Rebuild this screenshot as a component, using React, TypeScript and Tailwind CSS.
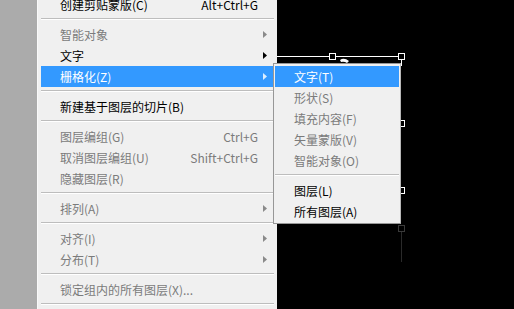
import React from 'react'

type Item =
  | { sep: true }
  | { sep?: false; label: string; shortcut?: string; arrow?: boolean; disabled?: boolean; active?: boolean }

const mainItems: Item[] = [
  { label: '创建剪贴蒙版(C)', shortcut: 'Alt+Ctrl+G' },
  { sep: true },
  { label: '智能对象', arrow: true, disabled: true },
  { label: '文字', arrow: true },
  { label: '栅格化(Z)', arrow: true, active: true },
  { sep: true },
  { label: '新建基于图层的切片(B)' },
  { sep: true },
  { label: '图层编组(G)', shortcut: 'Ctrl+G', disabled: true },
  { label: '取消图层编组(U)', shortcut: 'Shift+Ctrl+G', disabled: true },
  { label: '隐藏图层(R)', disabled: true },
  { sep: true },
  { label: '排列(A)', arrow: true, disabled: true },
  { sep: true },
  { label: '对齐(I)', arrow: true, disabled: true },
  { label: '分布(T)', arrow: true, disabled: true },
  { sep: true },
  { label: '锁定组内的所有图层(X)...', disabled: true },
  { sep: true },
]

const subItems: Item[] = [
  { label: '文字(T)', active: true },
  { label: '形状(S)', disabled: true },
  { label: '填充内容(F)', disabled: true },
  { label: '矢量蒙版(V)', disabled: true },
  { label: '智能对象(O)', disabled: true },
  { sep: true },
  { label: '图层(L)' },
  { label: '所有图层(A)' },
]

function Arrow({ color }: { color: string }) {
  return (
    <svg width="4" height="7" viewBox="0 0 4 7">
      <path d="M0 0 L4 3.5 L0 7 Z" fill={color} />
    </svg>
  )
}

function Separator() {
  return (
    <div className="h-[9px] pt-[3px]">
      <div className="h-[2px] border-t border-[#bdbdbd] border-b border-b-white" />
    </div>
  )
}

function Row({ item, withArrowSlot }: { item: Exclude<Item, { sep: true }>; withArrowSlot: boolean }) {
  const color = item.active ? 'text-white' : item.disabled ? 'text-[#7b7b7b]' : 'text-black'
  const arrowColor = item.active ? '#dceeff' : item.disabled ? '#8a8a8a' : '#000000'
  return (
    <div className={`flex h-[21px] items-center pl-[19px] leading-[21px] ${color} ${item.active ? 'bg-[#3399ff]' : ''}`}>
      <span className="flex-1 whitespace-nowrap">{item.label}</span>
      {item.shortcut && <span className="whitespace-nowrap">{item.shortcut}</span>}
      {withArrowSlot && (
        <span className="flex w-[16px] items-center pl-[5px]">{item.arrow && <Arrow color={arrowColor} />}</span>
      )}
    </div>
  )
}

function Handle({ className }: { className: string }) {
  return <div className={`absolute h-[7px] w-[7px] border bg-black ${className}`} />
}

export default function App() {
  return (
    <div
      className="relative flex h-[309px] w-[514px] overflow-hidden bg-black text-[12px]"
      style={{ fontFamily: '"Noto Sans CJK SC", "Liberation Sans", sans-serif' }}
    >
      <div className="w-[37px] bg-[#ababab]" />

      <div className="w-[240px] border-l border-[#f9f9f9] bg-[#f0f0f0] px-[3px]">
        <div className="mt-[-6px]">
          {mainItems.map((item, i) =>
            item.sep ? <Separator key={i} /> : <Row key={i} item={item} withArrowSlot />
          )}
        </div>
      </div>

      {/* canvas with the transform box */}
      <div className="relative flex-1">
        <div className="absolute left-0 top-[56px] h-px w-[124px] bg-white" />
        <div className="absolute left-[124px] top-[56px] h-[10px] w-px bg-white" />
        <div className="absolute left-[124px] top-[232px] h-[30px] w-px bg-[#2a2a2a]" />
        <Handle className="left-[52px] top-[53px] border-white" />
        <Handle className="left-[121px] top-[53px] border-white" />
        <Handle className="left-[121px] top-[120px] border-white" />
        <Handle className="left-[121px] top-[187px] border-white" />
        <Handle className="left-[121px] top-[225px] border-[#3a3a3a]" />
        <svg className="absolute left-[63px] top-[58px]" width="9" height="6" viewBox="0 0 9 6">
          <path d="M0 2 Q4 -1 9 3 L7 5 Q4 3 1 4 Z" fill="#ffffff" />
        </svg>
      </div>

      {/* submenu */}
      <div className="absolute left-[273px] top-[63px] h-[161px] w-[128px] border border-[#979797] border-r-[#b8b8b8] bg-[#f0f0f0] px-[1px] pt-[2px]">
        {subItems.map((item, i) =>
          item.sep ? <Separator key={i} /> : <Row key={i} item={item} withArrowSlot={false} />
        )}
      </div>
    </div>
  )
}
